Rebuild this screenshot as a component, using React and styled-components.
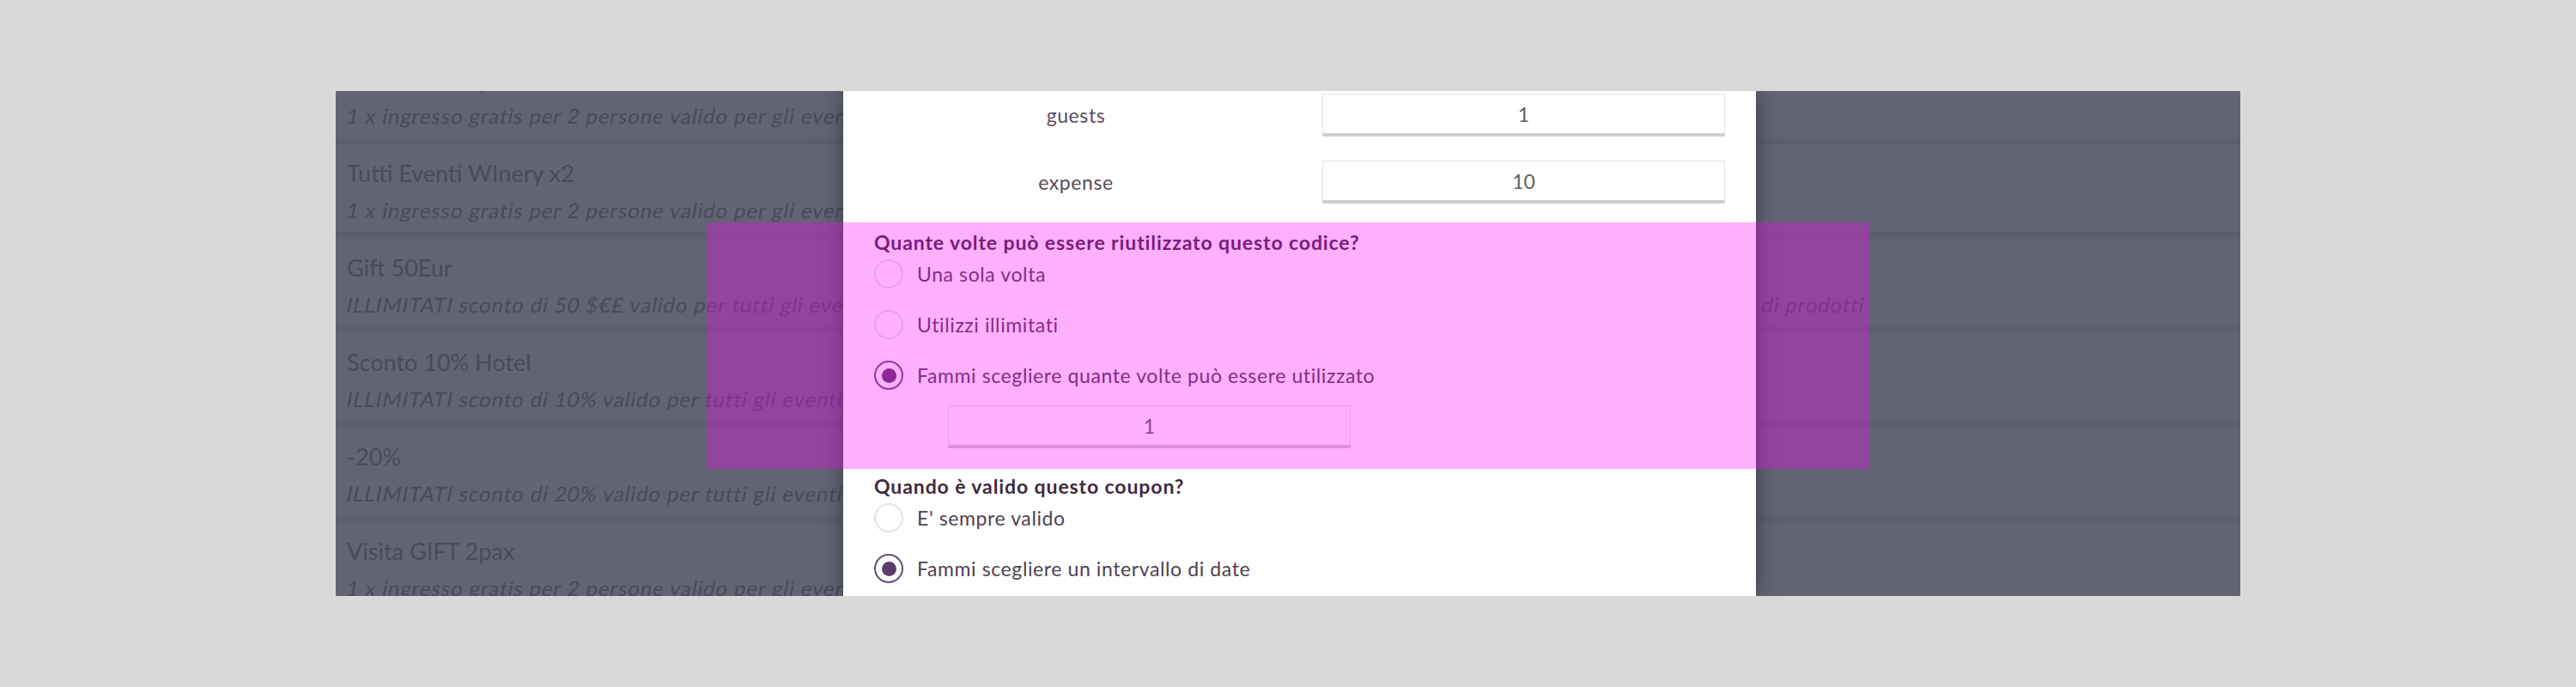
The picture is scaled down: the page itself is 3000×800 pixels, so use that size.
import React from 'react';
import styled, { createGlobalStyle } from 'styled-components';

const GlobalStyle = createGlobalStyle`
  html, body {
    margin: 0;
    padding: 0;
    background: #d9d9d9;
    font-family: 'Lato', 'Noto Sans', sans-serif;
  }
`;

const Page = styled.div`
  width: 3000px;
  height: 800px;
  padding: 106px 0 0 391px;
  box-sizing: border-box;
`;

const Stage = styled.div`
  position: relative;
  width: 2218px;
  height: 588px;
  overflow: hidden;
  background: #626473;
`;

// the list is scrolled: the first row is cut at the top
const List = styled.ul`
  list-style: none;
  margin: -48px 0 0;
  padding: 0;
`;

const Row = styled.li`
  height: 88px;
  padding: 14px 13px 0;
  border-bottom: 8px solid #5d5f6f;
`;

const RowTitle = styled.div`
  font-size: 27px;
  line-height: 40px;
  color: #484a5c;
  white-space: nowrap;
`;

const RowText = styled.div`
  display: flex;
  justify-content: space-between;
  width: ${(p) => p.$width || 'auto'};
  margin-top: 5px;
  font-size: 24px;
  line-height: 36px;
  letter-spacing: 0.9px;
  color: #484a5c;
  white-space: nowrap;
  transform: skewX(-11deg);
`;

const Modal = styled.div`
  position: absolute;
  top: 0;
  left: 591px;
  width: 1063px;
  height: 100%;
  background: #ffffff;
  box-shadow: 0 0 22px rgba(20, 20, 30, 0.5);
  padding: 3px 36px 0;
  box-sizing: border-box;
`;

const FieldRow = styled.div`
  display: grid;
  grid-template-columns: 542px 469px;
  column-gap: 16px;
  align-items: center;
  height: 50px;
  margin: 0 0 28px -36px;
`;

const FieldLabel = styled.label`
  text-align: center;
  font-size: 23px;
  letter-spacing: 0.6px;
  color: #5a4b5d;
`;

const NumberInput = styled.div`
  width: 469px;
  height: 50px;
  box-sizing: border-box;
  border: 1px solid #e2e2e2;
  border-bottom: 4px solid #cfcfcf;
  background: #fff;
  display: flex;
  align-items: center;
  justify-content: center;
  font-size: 23px;
  color: #5e5e66;
`;

const Section = styled.section`
  padding: 9px 0 ${(p) => p.$bottom || '21px'};
  &:first-of-type {
    margin-top: -6px;
  }
`;

const SectionTitle = styled.h3`
  margin: 0;
  font-size: 23px;
  line-height: 28px;
  font-weight: 700;
  letter-spacing: 0.9px;
  color: #3e2a40;
`;

const Options = styled.div`
  display: flex;
  flex-direction: column;
  gap: 13px;
`;

const Option = styled.label`
  display: flex;
  align-items: center;
  gap: 16px;
  height: 46px;
  font-size: 23px;
  letter-spacing: 0.6px;
  color: #4f3f53;
`;

const Radio = styled.span`
  width: 34px;
  height: 34px;
  box-sizing: border-box;
  border-radius: 50%;
  border: 2px solid ${(p) => (p.$checked ? '#6a4e7a' : '#e1e6ea')};
  display: flex;
  align-items: center;
  justify-content: center;
  flex-shrink: 0;

  &::after {
    content: '';
    width: 17px;
    height: 17px;
    border-radius: 50%;
    background: #5a3d6b;
    display: ${(p) => (p.$checked ? 'block' : 'none')};
  }
`;

const SubInput = styled.div`
  margin-top: 12px;
  padding-left: 86px;
`;

const Highlight = styled.div`
  position: absolute;
  left: 432px;
  top: 153px;
  width: 1354px;
  height: 287px;
  background: rgba(255, 0, 255, 0.31);
  pointer-events: none;
`;

const rows = [
  { title: 'Visita GIFT 2pax', text: '1 x ingresso gratis per 2 persone valido per gli eventi in cantina' },
  { title: 'Tutti Eventi WInery x2', text: '1 x ingresso gratis per 2 persone valido per gli eventi in cantina' },
  {
    title: 'Gift 50Eur',
    text: 'ILLIMITATI sconto di 50 $€£ valido per tutti gli eventi in cantina e per l’acquisto',
    tail: 'di prodotti',
    width: '1768px',
  },
  { title: 'Sconto 10% Hotel', text: 'ILLIMITATI sconto di 10% valido per tutti gli eventi' },
  { title: '-20%', text: 'ILLIMITATI sconto di 20% valido per tutti gli eventi' },
  { title: 'Visita GIFT 2pax', text: '1 x ingresso gratis per 2 persone valido per gli eventi in cantina' },
];

export default function App() {
  return (
    <>
      <GlobalStyle />
      <Page>
        <Stage>
          <List>
            {rows.map((r, i) => (
              <Row key={i}>
                <RowTitle>{r.title}</RowTitle>
                <RowText $width={r.width}>
                  <span>{r.text}</span>
                  {r.tail && <span>{r.tail}</span>}
                </RowText>
              </Row>
            ))}
          </List>

          <Modal>
            <FieldRow>
              <FieldLabel>guests</FieldLabel>
              <NumberInput>1</NumberInput>
            </FieldRow>
            <FieldRow>
              <FieldLabel>expense</FieldLabel>
              <NumberInput>10</NumberInput>
            </FieldRow>

            <Section>
              <SectionTitle>Quante volte può essere riutilizzato questo codice?</SectionTitle>
              <Options>
                <Option>
                  <Radio />
                  Una sola volta
                </Option>
                <Option>
                  <Radio />
                  Utilizzi illimitati
                </Option>
                <Option>
                  <Radio $checked />
                  Fammi scegliere quante volte può essere utilizzato
                </Option>
              </Options>
              <SubInput>
                <NumberInput>1</NumberInput>
              </SubInput>
            </Section>

            <Section>
              <SectionTitle>Quando è valido questo coupon?</SectionTitle>
              <Options>
                <Option>
                  <Radio />
                  E' sempre valido
                </Option>
                <Option>
                  <Radio $checked />
                  Fammi scegliere un intervallo di date
                </Option>
              </Options>
            </Section>
          </Modal>

          <Highlight />
        </Stage>
      </Page>
    </>
  );
}
